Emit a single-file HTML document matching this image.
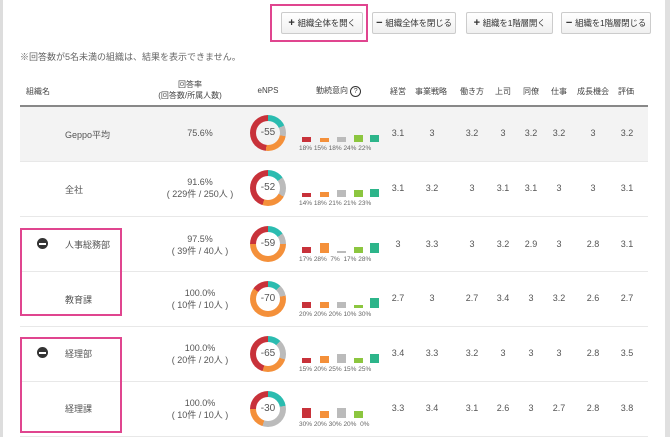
<!DOCTYPE html>
<html><head><meta charset="utf-8"><style>
body{margin:0;width:670px;height:437px;overflow:hidden;background:#fff;font-family:"Liberation Sans","Noto Sans CJK JP",sans-serif;color:#555;position:relative}
.lb{position:absolute;left:0;top:0;width:3px;height:437px;background:#ddd}
.rb{position:absolute;left:665px;top:0;width:5px;height:437px;background:#e0e0e0}
.btn{position:absolute;top:12px;height:20px;border:1px solid #ccc;border-radius:2px;background:linear-gradient(#fff,#f0f0f0);font-size:8.5px;line-height:20px;text-align:center;color:#333;white-space:nowrap;overflow:hidden;letter-spacing:-0.2px}
.btn b{font-size:11px;margin-right:3px}
.pink{position:absolute;border:2px solid #e0458f}
.a{position:absolute;font-size:9px;white-space:nowrap}
.c{transform:translateX(-50%);text-align:center}
.h{color:#444;font-size:8px}
.row{position:absolute;left:20px;width:628px;height:54px;border-bottom:1px solid #e8e8e8}
.d{position:absolute;width:36px;height:36px;border-radius:50%}
.d::after{content:"";position:absolute;left:6px;top:6px;width:24px;height:24px;border-radius:50%;background:var(--bg,#fff)}
.d span{position:absolute;left:0;top:12px;width:36px;text-align:center;font-size:10px;z-index:1;color:#555}
.bar{position:absolute;width:9px}
.pl{position:absolute;font-size:6.5px;color:#666;white-space:nowrap}
.m{position:absolute;width:11px;height:11px;border-radius:50%;background:#333}
.m::after{content:"";position:absolute;left:2px;top:4.5px;width:7px;height:2px;background:#fff}
</style></head><body>
<div class="lb"></div><div class="rb"></div>
<div class="pink" style="left:270px;top:4px;width:94px;height:34px"></div>
<div class="btn" style="left:281px;width:80px"><b>+</b>組織全体を開く</div>
<div class="btn" style="left:372px;width:82px"><b>−</b>組織全体を閉じる</div>
<div class="btn" style="left:466px;width:85px"><b>+</b>組織を1階層開く</div>
<div class="btn" style="left:561px;width:88px"><b>−</b>組織を1階層閉じる</div>
<div class="a" style="left:20px;top:50px;color:#666">※回答数が5名未満の組織は、結果を表示できません。</div>

<div class="a h" style="left:26px;top:86px">組織名</div>
<div class="a c h" style="left:190px;top:79px;line-height:11px">回答率<br>(回答数/所属人数)</div>
<div class="a c h" style="left:268px;top:86px">eNPS</div>
<div class="a h" style="left:316px;top:85px">勤続意向 <span style="display:inline-block;width:9px;height:9px;border:1px solid #333;border-radius:50%;font-size:7px;line-height:9px;text-align:center">?</span></div>
<div class="a c h" style="left:398px;top:86px">経営</div>
<div class="a c h" style="left:431px;top:86px">事業戦略</div>
<div class="a c h" style="left:472px;top:86px">働き方</div>
<div class="a c h" style="left:503px;top:86px">上司</div>
<div class="a c h" style="left:531px;top:86px">同僚</div>
<div class="a c h" style="left:559px;top:86px">仕事</div>
<div class="a c h" style="left:593px;top:86px">成長機会</div>
<div class="a c h" style="left:626px;top:86px">評価</div>
<div style="position:absolute;left:20px;top:105px;width:628px;height:2px;background:#888"></div>

<div class="row" style="top:107px;background:#f3f3f3"></div>
<div class="row" style="top:162px"></div>
<div class="row" style="top:217px"></div>
<div class="row" style="top:272px"></div>
<div class="row" style="top:327px"></div>
<div class="row" style="top:382px"></div>

<div class="a" style="left:65px;top:128px">Geppo平均</div>
<div class="a c" style="left:200px;top:128px">75.6%</div>
<div class="d" style="left:250px;top:115px;--bg:#f3f3f3;background:conic-gradient(#2bbcb0 0 18%,#bbb 0 28%,#f4903a 0 52%,#c8323a 0)"><span>-55</span></div>
<div class="bar" style="left:302px;top:137px;height:5px;background:#c8323a"></div>
<div class="bar" style="left:320px;top:138px;height:4px;background:#f4903a"></div>
<div class="bar" style="left:337px;top:137px;height:5px;background:#bbb"></div>
<div class="bar" style="left:354px;top:135px;height:7px;background:#8cc63f"></div>
<div class="bar" style="left:370px;top:135px;height:7px;background:#2db58a"></div>
<div class="pl" style="left:299px;top:145px">18% 15% 18% 24% 22%</div>

<div class="a" style="left:65px;top:183px">全社</div>
<div class="a c" style="left:200px;top:176px;line-height:12px">91.6%<br>( 229件 / 250人 )</div>
<div class="d" style="left:250px;top:170px;background:conic-gradient(#2bbcb0 0 15%,#bbb 0 33%,#f4903a 0 55%,#c8323a 0)"><span>-52</span></div>
<div class="bar" style="left:302px;top:193px;height:4px;background:#c8323a"></div>
<div class="bar" style="left:320px;top:192px;height:5px;background:#f4903a"></div>
<div class="bar" style="left:337px;top:190px;height:7px;background:#bbb"></div>
<div class="bar" style="left:354px;top:190px;height:7px;background:#8cc63f"></div>
<div class="bar" style="left:370px;top:189px;height:8px;background:#2db58a"></div>
<div class="pl" style="left:299px;top:200px">14% 18% 21% 21% 23%</div>

<div class="m" style="left:37px;top:238px"></div>
<div class="a" style="left:65px;top:238px">人事総務部</div>
<div class="a c" style="left:200px;top:233px;line-height:12px">97.5%<br>( 39件 / 40人 )</div>
<div class="d" style="left:250px;top:226px;background:conic-gradient(#2bbcb0 0 15%,#bbb 0 25%,#f4903a 0 75%,#c8323a 0)"><span>-59</span></div>
<div class="bar" style="left:302px;top:247px;height:6px;background:#c8323a"></div>
<div class="bar" style="left:320px;top:243px;height:10px;background:#f4903a"></div>
<div class="bar" style="left:337px;top:251px;height:2px;background:#bbb"></div>
<div class="bar" style="left:354px;top:247px;height:6px;background:#8cc63f"></div>
<div class="bar" style="left:370px;top:243px;height:10px;background:#2db58a"></div>
<div class="pl" style="left:299px;top:256px">17% 28% &nbsp;7% &nbsp;17% 28%</div>

<div class="a" style="left:65px;top:293px">教育課</div>
<div class="a c" style="left:200px;top:287px;line-height:12px">100.0%<br>( 10件 / 10人 )</div>
<div class="d" style="left:250px;top:281px;background:conic-gradient(#2bbcb0 0 12%,#bbb 0 22%,#f4903a 0 85%,#c8323a 0)"><span>-70</span></div>
<div class="bar" style="left:302px;top:302px;height:6px;background:#c8323a"></div>
<div class="bar" style="left:320px;top:302px;height:6px;background:#f4903a"></div>
<div class="bar" style="left:337px;top:302px;height:6px;background:#bbb"></div>
<div class="bar" style="left:354px;top:305px;height:3px;background:#8cc63f"></div>
<div class="bar" style="left:370px;top:298px;height:10px;background:#2db58a"></div>
<div class="pl" style="left:299px;top:311px">20% 20% 20% 10% 30%</div>

<div class="m" style="left:37px;top:347px"></div>
<div class="a" style="left:65px;top:347px">経理部</div>
<div class="a c" style="left:200px;top:342px;line-height:12px">100.0%<br>( 20件 / 20人 )</div>
<div class="d" style="left:250px;top:336px;background:conic-gradient(#2bbcb0 0 12%,#bbb 0 30%,#f4903a 0 55%,#c8323a 0)"><span>-65</span></div>
<div class="bar" style="left:302px;top:358px;height:5px;background:#c8323a"></div>
<div class="bar" style="left:320px;top:356px;height:7px;background:#f4903a"></div>
<div class="bar" style="left:337px;top:354px;height:9px;background:#bbb"></div>
<div class="bar" style="left:354px;top:358px;height:5px;background:#8cc63f"></div>
<div class="bar" style="left:370px;top:354px;height:9px;background:#2db58a"></div>
<div class="pl" style="left:299px;top:366px">15% 20% 25% 15% 25%</div>

<div class="a" style="left:65px;top:402px">経理課</div>
<div class="a c" style="left:200px;top:397px;line-height:12px">100.0%<br>( 10件 / 10人 )</div>
<div class="d" style="left:250px;top:391px;background:conic-gradient(#2bbcb0 0 22%,#bbb 0 55%,#f4903a 0 75%,#c8323a 0)"><span>-30</span></div>
<div class="bar" style="left:302px;top:408px;height:10px;background:#c8323a"></div>
<div class="bar" style="left:320px;top:411px;height:7px;background:#f4903a"></div>
<div class="bar" style="left:337px;top:408px;height:10px;background:#bbb"></div>
<div class="bar" style="left:354px;top:411px;height:7px;background:#8cc63f"></div>
<div class="pl" style="left:299px;top:421px">30% 20% 30% 20% &nbsp;0%</div>

<div class="pink" style="left:20px;top:228px;width:98px;height:84px"></div>
<div class="pink" style="left:20px;top:337px;width:98px;height:92px"></div>

<div class="a c" style="left:398px;top:128px">3.1</div><div class="a c" style="left:432px;top:128px">3</div><div class="a c" style="left:472px;top:128px">3.2</div><div class="a c" style="left:503px;top:128px">3</div><div class="a c" style="left:531px;top:128px">3.2</div><div class="a c" style="left:559px;top:128px">3.2</div><div class="a c" style="left:593px;top:128px">3</div><div class="a c" style="left:627px;top:128px">3.2</div>
<div class="a c" style="left:398px;top:183px">3.1</div><div class="a c" style="left:432px;top:183px">3.2</div><div class="a c" style="left:472px;top:183px">3</div><div class="a c" style="left:503px;top:183px">3.1</div><div class="a c" style="left:531px;top:183px">3.1</div><div class="a c" style="left:559px;top:183px">3</div><div class="a c" style="left:593px;top:183px">3</div><div class="a c" style="left:627px;top:183px">3.1</div>
<div class="a c" style="left:398px;top:239px">3</div><div class="a c" style="left:432px;top:239px">3.3</div><div class="a c" style="left:472px;top:239px">3</div><div class="a c" style="left:503px;top:239px">3.2</div><div class="a c" style="left:531px;top:239px">2.9</div><div class="a c" style="left:559px;top:239px">3</div><div class="a c" style="left:593px;top:239px">2.8</div><div class="a c" style="left:627px;top:239px">3.1</div>
<div class="a c" style="left:398px;top:293px">2.7</div><div class="a c" style="left:432px;top:293px">3</div><div class="a c" style="left:472px;top:293px">2.7</div><div class="a c" style="left:503px;top:293px">3.4</div><div class="a c" style="left:531px;top:293px">3</div><div class="a c" style="left:559px;top:293px">3.2</div><div class="a c" style="left:593px;top:293px">2.6</div><div class="a c" style="left:627px;top:293px">2.7</div>
<div class="a c" style="left:398px;top:348px">3.4</div><div class="a c" style="left:432px;top:348px">3.3</div><div class="a c" style="left:472px;top:348px">3.2</div><div class="a c" style="left:503px;top:348px">3</div><div class="a c" style="left:531px;top:348px">3</div><div class="a c" style="left:559px;top:348px">3</div><div class="a c" style="left:593px;top:348px">2.8</div><div class="a c" style="left:627px;top:348px">3.5</div>
<div class="a c" style="left:398px;top:403px">3.3</div><div class="a c" style="left:432px;top:403px">3.4</div><div class="a c" style="left:472px;top:403px">3.1</div><div class="a c" style="left:503px;top:403px">2.6</div><div class="a c" style="left:531px;top:403px">3</div><div class="a c" style="left:559px;top:403px">2.7</div><div class="a c" style="left:593px;top:403px">2.8</div><div class="a c" style="left:627px;top:403px">3.8</div>
</body></html>
